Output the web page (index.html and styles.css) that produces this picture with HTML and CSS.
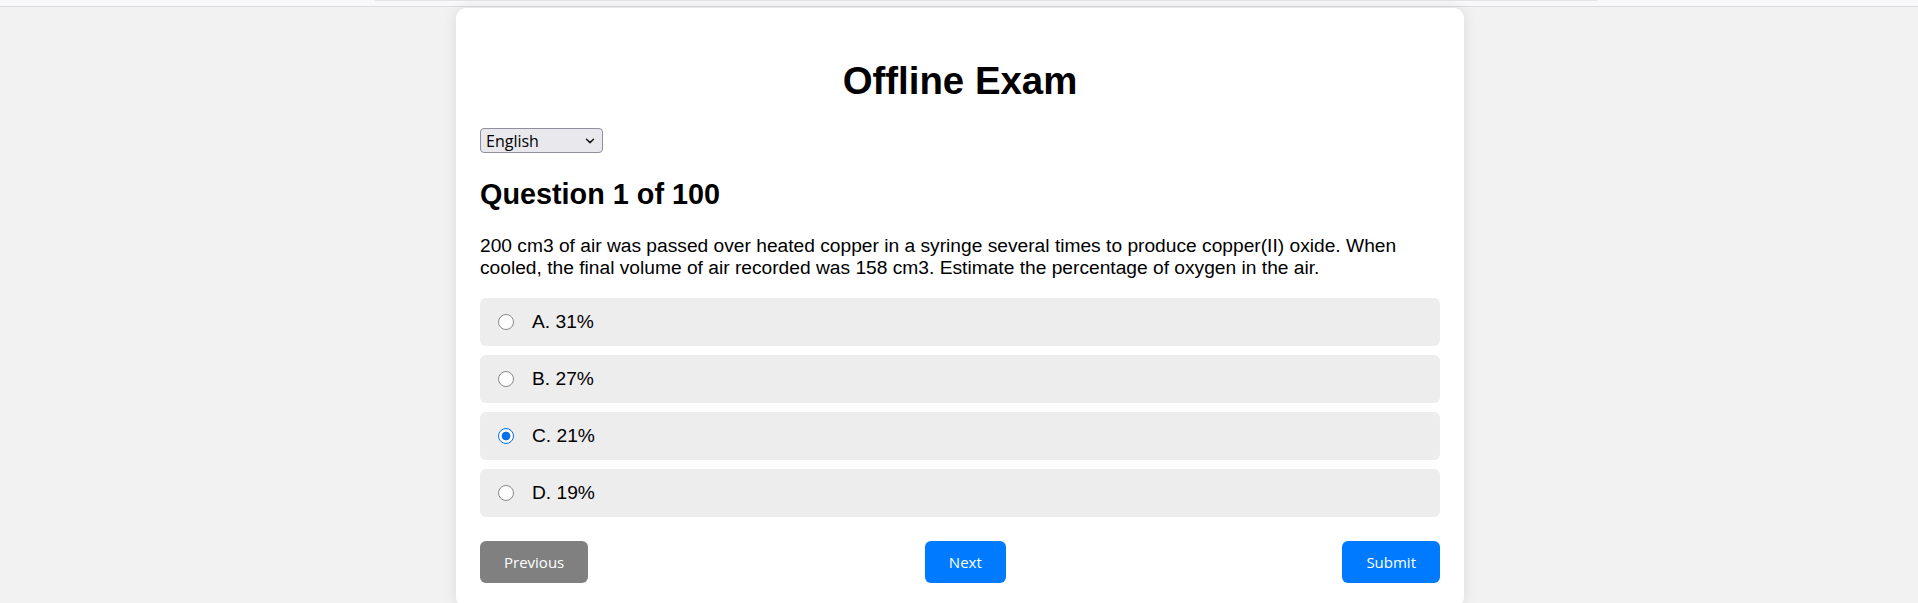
FILE: index.html
```html
<!DOCTYPE html>
<html lang="en">
<head>
<meta charset="utf-8">
<title>Offline Exam</title>
<link rel="stylesheet" href="styles.css">
</head>
<body>
<div class="topbar"><div class="tab-strip"></div></div>
<main class="page">
  <section class="card">
    <h1 class="title">Offline Exam</h1>
    <div class="lang-wrap">
      <select class="lang">
        <option>English</option>
        <option>Kiswahili</option>
      </select>
      <svg class="chev" width="10" height="6" viewBox="0 0 10 6" aria-hidden="true"><path d="M1.5 1.2 L5 4.6 L8.5 1.2" fill="none" stroke="#1a1a1a" stroke-width="1.5" stroke-linecap="round" stroke-linejoin="round"/></svg>
    </div>
    <h2 class="q-count">Question 1 of 100</h2>
    <p class="q-text">200 cm3 of air was passed over heated copper in a syringe several times to produce copper(II) oxide. When cooled, the final volume of air recorded was 158 cm3. Estimate the percentage of oxygen in the air.</p>
    <div class="options">
      <label class="option"><input class="radio" type="radio" name="q1"><span>A. 31%</span></label>
      <label class="option"><input class="radio" type="radio" name="q1"><span>B. 27%</span></label>
      <label class="option"><input class="radio" type="radio" name="q1" checked><span>C. 21%</span></label>
      <label class="option"><input class="radio" type="radio" name="q1"><span>D. 19%</span></label>
    </div>
    <div class="nav">
      <button class="btn btn-prev" type="button">Previous</button>
      <button class="btn btn-primary" type="button">Next</button>
      <button class="btn btn-primary" type="button">Submit</button>
    </div>
  </section>
</main>
</body>
</html>
```
FILE: styles.css
```css
html, body {
  margin: 0;
  height: 100%;
  overflow: hidden;
}

body {
  background: #f2f2f2;
  font-family: "Liberation Sans", Arial, sans-serif;
  font-size: 19.2px;
  color: #000;
}

.topbar {
  height: 6px;
  background: #f8f8fa;
  border-bottom: 1px solid #dcdcde;
}

.tab-strip {
  margin-left: 375px;
  width: 1222px;
  height: 1px;
  background: #e4e4e8;
}

.page {
  display: flex;
  justify-content: center;
  padding: 1px 0 0 2px;
}

.card {
  width: 960px;
  padding: 24px 24px 24px;
  background: #fff;
  border-radius: 10px;
  box-shadow: 0 0 14px rgba(0, 0, 0, 0.1);
}

.title {
  font-size: 38.4px;
  font-weight: bold;
  text-align: center;
  margin: 27px 0 25px;
}

.lang-wrap {
  position: relative;
  width: 123px;
}

.lang {
  appearance: none;
  -webkit-appearance: none;
  display: block;
  width: 123px;
  height: 25px;
  margin: 0;
  padding: 1px 20px 0 5px;
  font-family: "Open Sans", "Noto Sans", sans-serif;
  font-size: 16px;
  line-height: 22px;
  color: #000;
  background-color: #e9e9ed;
  border: 1px solid #8f8f9d;
  border-radius: 4px;
}

.chev {
  position: absolute;
  right: 8px;
  top: 10px;
  pointer-events: none;
}

.q-count {
  font-size: 28.8px;
  font-weight: bold;
  margin: 24.5px 0 24px;
}

.q-text {
  margin: 0 0 19.4px;
}

.options {
  display: flex;
  flex-direction: column;
  gap: 9.2px;
}

.option {
  display: flex;
  align-items: center;
  gap: 18px;
  height: 48px;
  box-sizing: border-box;
  padding: 0 18px;
  line-height: 22px;
  background: #ededed;
  border-radius: 6px;
}

.radio {
  appearance: none;
  -webkit-appearance: none;
  width: 16px;
  height: 16px;
  margin: 0;
  flex: none;
  box-sizing: border-box;
  border: 1px solid #8a8a8a;
  border-radius: 50%;
  background: #fff;
}

.radio:checked {
  border: 1.6px solid #0a6fe8;
  background: radial-gradient(circle, #0a6fe8 0 4px, #fff 4.7px);
}

.nav {
  display: flex;
  justify-content: space-between;
  margin-top: 23.4px;
}

.btn {
  height: 42px;
  padding: 0 24px;
  border: none;
  border-radius: 6px;
  font-family: "Open Sans", "Noto Sans", sans-serif;
  font-size: 15px;
  color: #fff;
  cursor: pointer;
}

.btn-prev {
  background: #808080;
}

.btn-primary {
  background: #007bff;
}
```
